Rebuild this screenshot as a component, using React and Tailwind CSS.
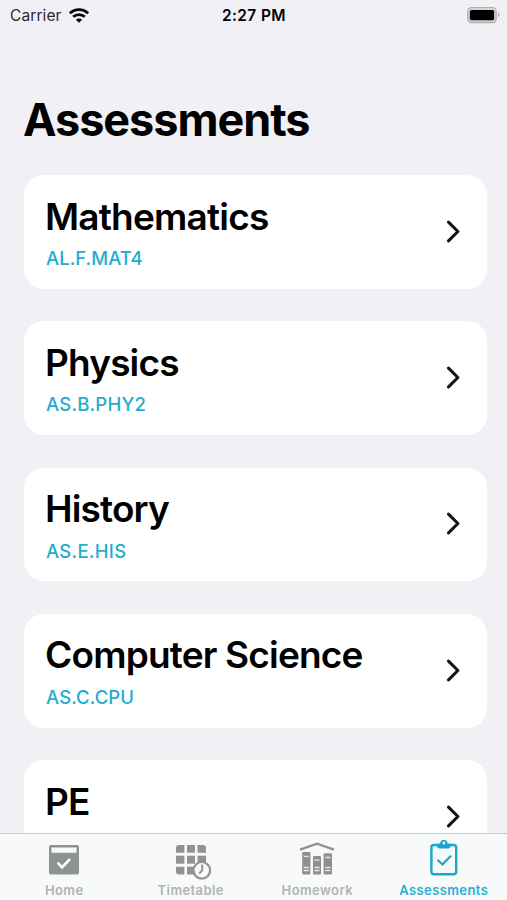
const subjects = [
  { name: "Mathematics", code: "AL.F.MAT4", nameTrack: "tracking-[-0.8px]", codeTrack: "tracking-[0.03px]" },
  { name: "Physics", code: "AS.B.PHY2", nameTrack: "tracking-[-0.85px]", codeTrack: "tracking-[0.2px]" },
  { name: "History", code: "AS.E.HIS", nameTrack: "tracking-[-0.85px]", codeTrack: "tracking-[0.28px]" },
  { name: "Computer Science", code: "AS.C.CPU", nameTrack: "tracking-[-0.82px]", codeTrack: "tracking-[0.1px]" },
  { name: "PE", code: null, nameTrack: "tracking-[-0.85px]", codeTrack: "" },
];

function WifiIcon() {
  return (
    <svg width="20" height="16" viewBox="0 0 20 16" fill="none" stroke="#050505" strokeWidth="2.7">
      <path d="M0.9 5.3C6 0.3 14 0.3 19.1 5.3" />
      <path d="M4.2 8.8C7.5 5.8 12.5 5.8 15.8 8.8" />
      <path d="M10 14.8L6.9 11.8C8.7 10.1 11.3 10.1 13.1 11.8Z" fill="#050505" stroke="none" />
    </svg>
  );
}

function BatteryIcon() {
  return (
    <svg width="34" height="17" viewBox="0 0 34 17">
      <rect x="0.2" y="0.2" width="28.4" height="15.2" rx="4" fill="#d2d2d5" stroke="#adadb0" strokeWidth="1.2" transform="translate(0.6 0.3)" />
      <rect x="2.9" y="3" width="24.2" height="10.2" rx="1.6" fill="#000" />
      <path d="M31 5.8C32.9 6.4 32.9 9.6 31 10.2Z" fill="#a5a5a8" />
    </svg>
  );
}

function Chevron() {
  return (
    <svg width="16" height="24" viewBox="0 0 16 24" fill="none" stroke="#151515" strokeWidth="3.1" strokeLinecap="round" strokeLinejoin="round">
      <path d="M3.5 2.2L12.9 11.5L3.5 20.8" />
    </svg>
  );
}

function HomeIcon() {
  return (
    <svg width="40" height="42" viewBox="0 0 40 42">
      <path fillRule="evenodd" fill="#8f9292" d="M7 6H33Q35 6 35 8V33.5Q35 35.5 33 35.5H7Q5 35.5 5 33.5V8Q5 6 7 6ZM7.5 8.5V13.7H32.5V8.5Z" />
      <path d="M13.7 23.7L18 28.3L26 20" fill="none" stroke="#fff" strokeWidth="2.6" />
    </svg>
  );
}

function TimetableIcon() {
  return (
    <svg width="40" height="42" viewBox="0 0 40 42" fill="#929292">
      <path d="M8 6H13.4V13.7H5V9Q5 6 8 6Z" />
      <rect x="16" y="6" width="8" height="7.7" />
      <path d="M26.5 6H32Q35 6 35 9V13.7H26.5Z" />
      <rect x="5" y="16.7" width="8.4" height="8" />
      <rect x="16" y="16.7" width="8" height="8" />
      <rect x="26.5" y="16.7" width="8.5" height="8" />
      <path d="M5 27.7H13.4V35.5H8Q5 35.5 5 32.5Z" />
      <rect x="16" y="27.7" width="8" height="7.8" />
      <circle cx="30.8" cy="31.3" r="8.3" fill="#f8f9f9" stroke="#929292" strokeWidth="2.2" />
      <path d="M31.2 25.6V31.3L28.2 34.6" fill="none" stroke="#929292" strokeWidth="2" />
    </svg>
  );
}

function HomeworkIcon() {
  return (
    <svg width="40" height="42" viewBox="0 0 40 42">
      <path d="M3 10.7L20 4.7L37 10.7" fill="none" stroke="#8f8f8f" strokeWidth="2.3" />
      <g fill="#8f8f8f">
        <rect x="5.2" y="13" width="8.2" height="22.5" rx="1.2" />
        <rect x="16" y="17" width="8" height="18.5" rx="1.2" />
        <rect x="26.6" y="14.3" width="8.4" height="21.2" rx="1.2" />
      </g>
      <g stroke="#e8e8e8" strokeWidth="1.3">
        <path d="M6.7 17.3H11.8M17.5 21.2H22.5M28.2 18.5H33.4" />
        <path d="M6.7 28.5H11.8M6.7 31.5H11.8M17.5 28.5H22.5M17.5 31.5H22.5M28.2 28.5H33.4M28.2 31.5H33.4" />
      </g>
    </svg>
  );
}

function AssessmentsIcon() {
  return (
    <svg width="40" height="42" viewBox="0 0 40 42" fill="none" stroke="#16a9cd" strokeWidth="2.4">
      <rect x="7.4" y="6" width="24.8" height="29.2" rx="2.5" />
      <path d="M13 4.8H16C16.5 -0.6 23.2 -0.6 23.7 4.8H26.7V6.8Q26.7 9.5 24 9.5H15.7Q13 9.5 13 6.8Z" fill="#16a9cd" stroke="none" />
      <circle cx="19.9" cy="4" r="1.4" fill="#f8f9f9" stroke="none" />
      <path d="M13.6 20.8L18.4 25.5L27 16.8" strokeWidth="2.3" />
    </svg>
  );
}

const tabs = [
  { label: "Home", Icon: HomeIcon, color: "text-[#b0b2b3]" },
  { label: "Timetable", Icon: TimetableIcon, color: "text-[#b0b2b3]" },
  { label: "Homework", Icon: HomeworkIcon, color: "text-[#b0b2b3]" },
  { label: "Assessments", Icon: AssessmentsIcon, color: "text-[#27b0d1]" },
];

export default function App() {
  return (
    <div className="flex h-[900px] w-[507px] flex-col overflow-hidden bg-[#f1f0f5] font-['Inter',sans-serif] text-black">
      <header className="grid h-[31px] shrink-0 grid-cols-3 items-center pr-[6px] pl-[10px]">
        <div className="flex items-center gap-[7px]">
          <span className="text-[15.5px] leading-[31px] tracking-[0.1px] text-[#2b2b2d]">Carrier</span>
          <WifiIcon />
        </div>
        <span className="pr-[3px] text-center text-[15.5px] leading-[31px] font-semibold tracking-[0.35px]">2:27 PM</span>
        <div className="flex justify-end">
          <BatteryIcon />
        </div>
      </header>

      <main className="min-h-0 flex-1 overflow-hidden pr-5 pl-6">
        <h1 className="mt-[62px] -ml-px h-[54px] text-[45px] leading-[54px] font-bold tracking-[-1.05px] whitespace-nowrap">Assessments</h1>
        <ul className="mt-[28px] flex flex-col gap-[32.5px]">
          {subjects.map((s) => (
            <li key={s.name} className="flex h-[113.75px] shrink-0 items-center justify-between rounded-[20px] bg-white pr-[26px] pl-[22px]">
              <div className="flex flex-col gap-[7.5px] self-start pt-[19.5px] whitespace-nowrap">
                <h2 className={`-ml-px text-[37px] leading-[44px] font-semibold ${s.nameTrack}`}>{s.name}</h2>
                {s.code && <p className={`text-[18.5px] leading-6 font-medium text-[#1fadd0] ${s.codeTrack}`}>{s.code}</p>}
              </div>
              <Chevron />
            </li>
          ))}
        </ul>
      </main>

      <nav className="grid h-[67px] shrink-0 grid-cols-4 border-t border-[#c9cacc] bg-[#f8fafa] pl-px">
        {tabs.map(({ label, Icon, color }) => (
          <div key={label} className="flex flex-col items-center pt-[5px]">
            <Icon />
            <span className={`mt-px text-[13px] leading-4 font-semibold tracking-[0.4px] ${color}`}>{label}</span>
          </div>
        ))}
      </nav>
    </div>
  );
}
